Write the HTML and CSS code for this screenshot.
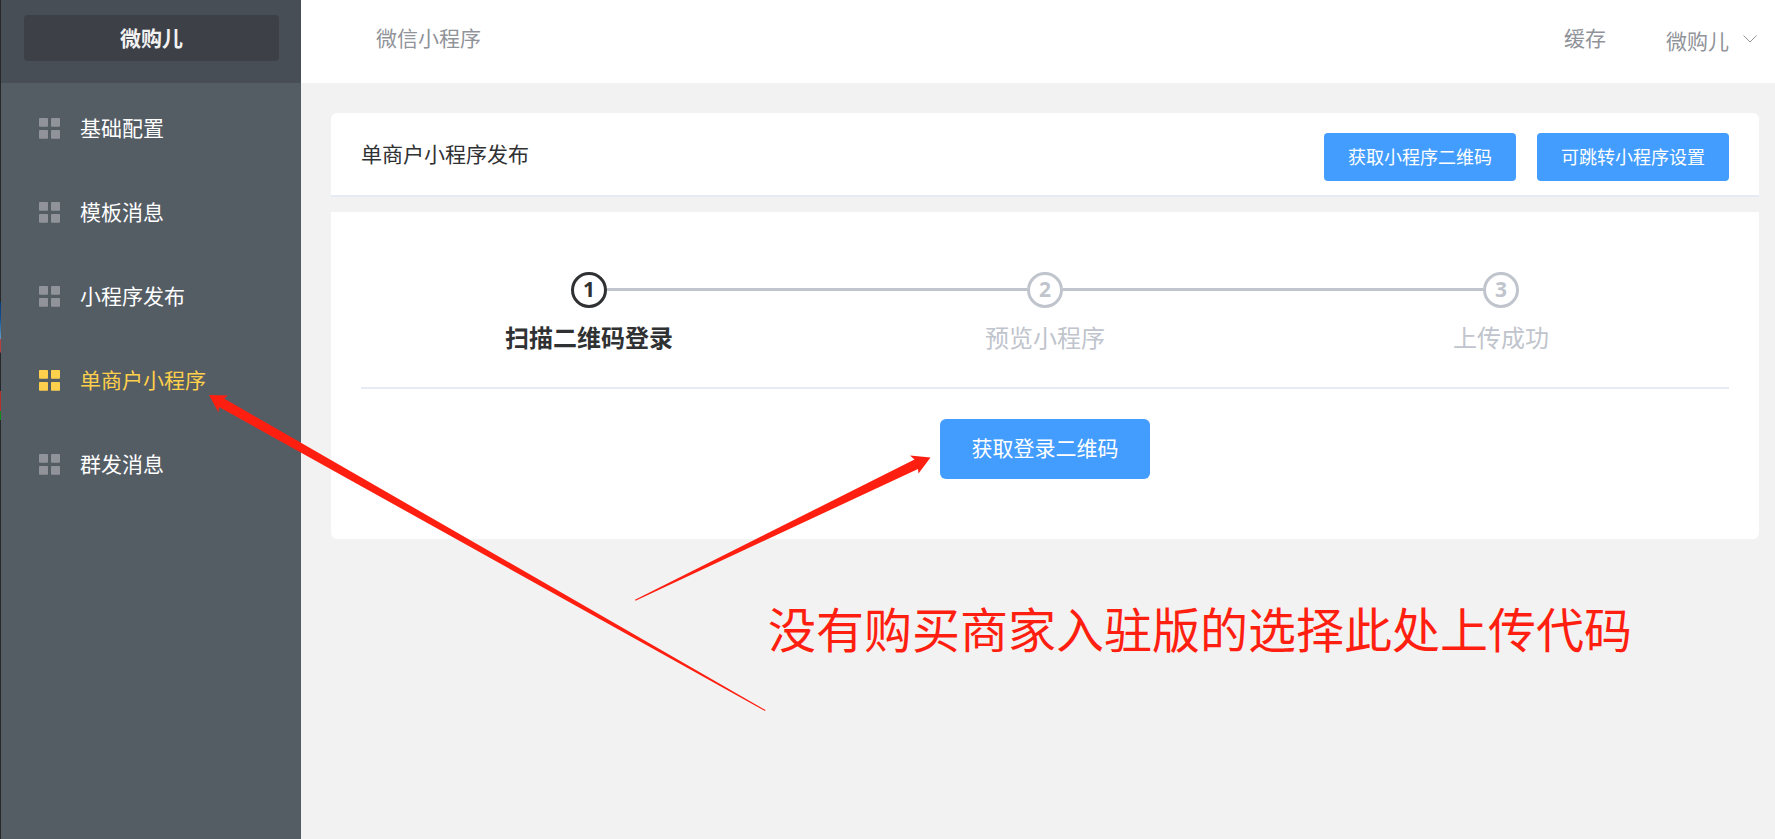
FILE: index.html
```html
<!DOCTYPE html>
<html lang="zh-CN">
<head>
<meta charset="utf-8">
<meta name="viewport" content="width=device-width, initial-scale=1">
<title>单商户小程序发布</title>
<link rel="stylesheet" href="styles.css">
</head>
<body>
<svg class="defs" aria-hidden="true">
  <symbol id="grid" viewBox="0 0 21 21">
    <rect x="0" y="0" width="9" height="8.700" rx="0.800"/>
    <rect x="12" y="0" width="9" height="8.700" rx="0.800"/>
    <rect x="0" y="12" width="9" height="8.700" rx="0.800"/>
    <rect x="12" y="12" width="9" height="8.700" rx="0.800"/>
  </symbol>
</svg>
<div class="app">
  <aside class="sidebar">
    <div class="brand"><button class="brand-button" type="button">微购儿</button></div>
    <nav class="menu">
      <a class="menu-item" href="#"><svg class="menu-icon"><use href="#grid"/></svg>基础配置</a>
      <a class="menu-item" href="#"><svg class="menu-icon"><use href="#grid"/></svg>模板消息</a>
      <a class="menu-item" href="#"><svg class="menu-icon"><use href="#grid"/></svg>小程序发布</a>
      <a class="menu-item active" href="#" aria-current="page"><svg class="menu-icon"><use href="#grid"/></svg>单商户小程序</a>
      <a class="menu-item" href="#"><svg class="menu-icon"><use href="#grid"/></svg>群发消息</a>
    </nav>
  </aside>
  <div class="page">
    <header class="topbar">
      <a class="top-link" href="#">微信小程序</a>
      <div class="top-actions">
        <a class="top-link" href="#">缓存</a>
        <button class="user" type="button">微购儿<svg class="chevron" viewBox="0 0 14 8"><path d="M0.5 0.5 7 7 13.5 0.5"/></svg></button>
      </div>
    </header>
    <main class="content">
      <section class="card card-head">
        <h1 class="card-title">单商户小程序发布</h1>
        <div class="card-actions">
          <button class="btn" type="button">获取小程序二维码</button>
          <button class="btn" type="button">可跳转小程序设置</button>
        </div>
      </section>
      <section class="card card-body">
        <ol class="steps">
          <li class="step current"><span class="step-head"><span class="step-num">1</span></span>扫描二维码登录</li>
          <li class="step"><span class="step-head"><span class="step-num">2</span></span>预览小程序</li>
          <li class="step"><span class="step-head"><span class="step-num">3</span></span>上传成功</li>
        </ol>
        <div class="login"><button class="btn btn-large" type="button">获取登录二维码</button></div>
      </section>
    </main>
  </div>
  <svg class="arrows" width="1000" height="760" aria-hidden="true">
    <path d="M209 395 228 395.5 224 398.5 765.5 710 765 711 219 407 218.500 412.500Z"/>
    <path d="M930.500 457.500 910 455.500 914.500 459.500 635 599.800 635.500 600.800 918 469 918.500 473.500Z"/>
  </svg>
  <p class="note">没有购买商家入驻版的选择此处上传代码</p>
</div>
</body>
</html>
```
FILE: styles.css
```css
* {
  box-sizing: border-box;
}

body {
  margin: 0;
  background: #f2f2f2;
  color: #303133;
  font-family: "Noto Sans CJK SC", sans-serif;
  font-size: 21px;
  line-height: 32px;
}

button {
  font: inherit;
  border: 0;
  cursor: pointer;
}

a {
  color: inherit;
  text-decoration: none;
}

.defs {
  display: none;
}

.app {
  position: relative;
  display: flex;
  min-height: 100vh;
}

/* Sidebar */
.sidebar {
  flex: none;
  width: 301px;
  padding-left: 1px;
  background:
    linear-gradient(#26282c 302px, #0a3a78 302px, #0d4f96 318px, #5d9cc8 338px, #b5403c 340px, #b5403c 352px, #26282c 353px, #26282c 391px, #b3302b 391px, #b3302b 411px, #128a1c 411px, #128a1c 420px, #26282c 420px) 0 0 / 1px 100% no-repeat,
    #545c64;
}

.brand {
  height: 83px;
  padding: 15px 22px 0 23px;
  background: #484e55;
}

.brand-button {
  width: 100%;
  height: 46px;
  padding: 0 0 2px;
  border-radius: 4px;
  background: #3d4047;
  color: #f2f2f2;
  font-weight: 700;
}

.menu {
  padding-top: 3px;
}

.menu-item {
  display: flex;
  align-items: center;
  gap: 20px;
  height: 84px;
  padding: 0 0 2px 38px;
  color: #fff;
}

.menu-icon {
  width: 21px;
  height: 21px;
  margin-top: 3px;
  fill: #909399;
}

.active {
  color: #ffd04b;
}

.active .menu-icon {
  fill: #ffd04b;
}

/* Top bar */
.page {
  flex: 1;
  min-width: 0;
}

.topbar {
  display: flex;
  justify-content: space-between;
  height: 83px;
  padding: 21px 18px 0 75px;
  background: #fff;
  color: #909399;
}

.top-actions {
  display: flex;
  gap: 60px;
}

.user {
  display: flex;
  align-items: flex-start;
  gap: 14px;
  padding: 3px 0 0;
  background: none;
  color: inherit;
}

.chevron {
  width: 14px;
  height: 8px;
  margin-top: 11px;
  fill: none;
  stroke: #909399;
}

/* Content */
.content {
  display: flex;
  flex-direction: column;
  gap: 15px;
  padding: 30px 16px 30px 30px;
}

.card {
  padding: 0 30px;
  background: #fff;
}

.card-head {
  display: flex;
  justify-content: space-between;
  padding-top: 20px;
  padding-bottom: 14px;
  border-bottom: 2px solid #e6ebf5;
  border-radius: 6px 6px 0 0;
}

.card-title {
  margin: 4px 0 0;
  font-size: 21px;
  font-weight: 400;
}

.card-actions {
  display: flex;
  gap: 21px;
}

.btn {
  height: 48px;
  padding: 0 24px 2px;
  border-radius: 4px;
  background: #439dff;
  color: #fff;
  font-size: 18px;
}

.card-body {
  padding-top: 60px;
  padding-bottom: 60px;
  border-radius: 0 0 6px 6px;
}

.steps {
  display: flex;
  margin: 0;
  padding: 0 0 32px;
  border-bottom: 2px solid #e6ebf5;
  list-style: none;
}

.step {
  flex: 1;
  color: #c0c4cc;
  font-size: 24px;
  line-height: 36px;
  text-align: center;
}

.step-head {
  display: flex;
  align-items: center;
  margin-bottom: 11px;
}

.step-head::before,
.step-head::after {
  content: "";
  flex: 1;
  height: 3px;
  margin-bottom: 1px;
  background: #c0c4cc;
}

.step:first-child .step-head::before,
.step:last-child .step-head::after {
  background: none;
}

.step-num {
  width: 36px;
  height: 36px;
  border: 3px solid #c0c4cc;
  border-radius: 50%;
  font: 700 21px/28px "Open Sans", sans-serif;
}

.current {
  color: #303133;
  font-weight: 700;
}

.current .step-num {
  border-color: #303133;
}

.login {
  padding-top: 30px;
  text-align: center;
  line-height: 0;
}

.btn-large {
  min-width: 210px;
  height: 60px;
  padding-bottom: 4px;
  border-radius: 6px;
  font-size: 21px;
  line-height: 32px;
}

/* Annotations drawn over the page */
.arrows {
  position: absolute;
  top: 0;
  left: 0;
  fill: #ff1f10;
  pointer-events: none;
}

.note {
  position: absolute;
  top: 591px;
  left: 768px;
  margin: 0;
  color: #ff1f10;
  font-size: 48px;
  line-height: 72px;
  white-space: nowrap;
}
```
